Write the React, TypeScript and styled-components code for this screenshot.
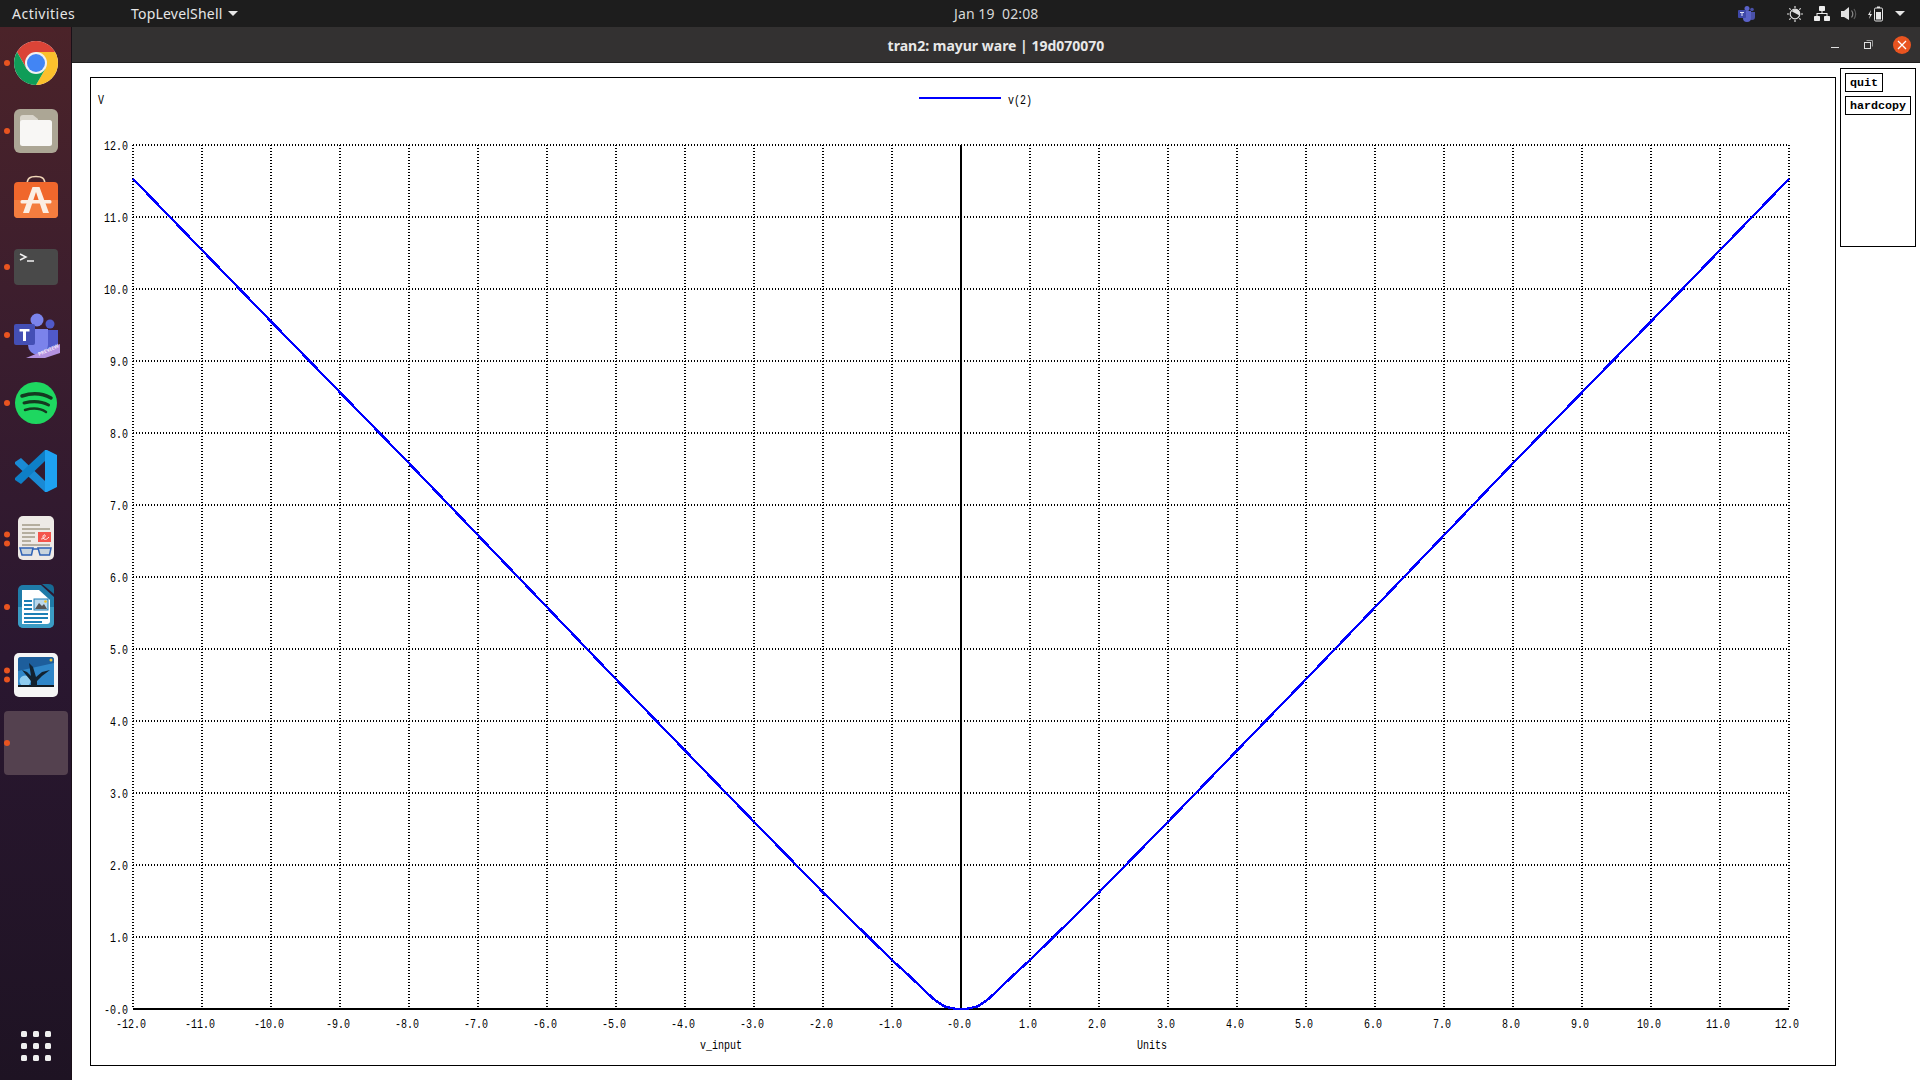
import styled, { createGlobalStyle } from "styled-components";

const GlobalStyle = createGlobalStyle`
  html, body {
    margin: 0;
    padding: 0;
    width: 1920px;
    height: 1080px;
    overflow: hidden;
    background: #fff;
  }
`;

const Screen = styled.div`
  display: flex;
  flex-direction: column;
  width: 1920px;
  height: 1080px;
`;
const TopBar = styled.header`
  display: grid;
  grid-template-columns: 954px auto 1fr;
  align-items: center;
  height: 27px;
  background: #1d1d1d;
  color: #e6e6e6;
  font-family: "Noto Sans", sans-serif;
  font-size: 14px;
`;
const TopLeft = styled.div`
  display: flex;
  align-items: center;
`;
const Activities = styled.span`
  margin-left: 12px;
  width: 119px;
  letter-spacing: 0.5px;
`;
const AppMenu = styled.span`
  display: flex;
  align-items: center;
  gap: 5px;
  letter-spacing: 0.2px;
`;
const Caret = styled.span`
  width: 0;
  height: 0;
  border-left: 5px solid transparent;
  border-right: 5px solid transparent;
  border-top: 5px solid #e6e6e6;
`;
const Clock = styled.span`
  color: #d8d8d8;
  white-space: pre;
  letter-spacing: 0.1px;
`;
const Tray = styled.div`
  display: flex;
  align-items: center;
  justify-content: flex-end;
  padding-right: 15px;
  gap: 11px;
`;
const TeamsTray = styled.span`
  display: flex;
  margin-right: 20px;
`;
const Main = styled.div`
  display: flex;
  flex: 1;
  min-height: 0;
`;
const Dock = styled.nav`
  display: flex;
  flex-direction: column;
  flex: none;
  width: 72px;
  padding-top: 2px;
  padding-bottom: 19px;
  box-sizing: border-box;
  background: linear-gradient(180deg, #4b2329 0%, #3a1d2e 30%, #2a1730 60%, #1e1323 100%);
  border-right: 1px solid #1a1018;
`;
const DockItem = styled.div<{ $active?: boolean }>`
  position: relative;
  display: flex;
  align-items: center;
  justify-content: center;
  height: 68px;
  flex: none;
  &::before {
    content: "";
    display: ${(p) => (p.$active ? "block" : "none")};
    position: absolute;
    left: 4px;
    top: 2px;
    width: 64px;
    height: 64px;
    border-radius: 4px;
    background: #54414f;
  }
`;
const Pips = styled.div`
  position: absolute;
  left: 4px;
  top: 50%;
  transform: translateY(-50%);
  display: flex;
  flex-direction: column;
  gap: 3px;
`;
const Pip = styled.i`
  display: block;
  width: 6px;
  height: 6px;
  border-radius: 50%;
  background: #e95420;
`;
const AppGrid = styled.div`
  display: grid;
  grid-template-columns: repeat(3, 6px);
  gap: 6px;
  margin: auto 0 0 21px;
`;
const GridDot = styled.i`
  display: block;
  width: 6px;
  height: 6px;
  border-radius: 1.5px;
  background: #f0f0f0;
`;
const Win = styled.div`
  display: flex;
  flex-direction: column;
  flex: 1;
  min-width: 0;
`;
const TitleBar = styled.div`
  position: relative;
  display: flex;
  align-items: center;
  justify-content: center;
  height: 36px;
  padding-top: 1px;
  box-sizing: border-box;
  background: #333131;
  border-bottom: 1px solid #1f1e1e;
  color: #e8e8e8;
  font-family: "Noto Sans", sans-serif;
  font-weight: 700;
  font-size: 14px;
`;
const WinControls = styled.div`
  position: absolute;
  right: 9px;
  top: 0;
  bottom: 0;
  display: flex;
  align-items: center;
  gap: 17px;
`;
const CloseButton = styled.span`
  display: flex;
  align-items: center;
  justify-content: center;
  width: 18px;
  height: 18px;
  border-radius: 50%;
  background: #e95420;
`;
const Body = styled.main`
  display: flex;
  align-items: flex-start;
  flex: 1;
  gap: 4px;
  padding-left: 18px;
  background: #fff;
`;
const PlotFrame = styled.div`
  display: flex;
  margin-top: 14px;
  border: 1px solid #000;
`;
const SidePanel = styled.aside`
  display: flex;
  flex-direction: column;
  align-items: flex-start;
  gap: 4px;
  width: 76px;
  height: 179px;
  margin-top: 5px;
  padding: 4px;
  box-sizing: border-box;
  border: 1px solid #000;
`;
const PanelButton = styled.button`
  height: 19px;
  padding: 1px 4px 0;
  background: #fff;
  border: 1px solid #000;
  border-radius: 0;
  color: #000;
  font-family: "Liberation Mono", monospace;
  font-weight: 700;
  font-size: 11.67px;
  line-height: 16px;
`;
const ChartText = styled.text`
  font-family: "Liberation Mono", monospace;
  font-size: 13px;
  fill: #000;
`;

const LEFT = 133;
const RIGHT = 1789;
const TOP = 145;
const BOTTOM = 1009;
const toX = (v: number) => LEFT + (v + 12) * 69;
const toY = (v: number) => BOTTOM - v * 72;

const xTicks = Array.from({ length: 25 }, (_, i) => i - 12);
const yTicks = Array.from({ length: 13 }, (_, i) => i);

// |v| curve read off the reference
const samples: [number, number][] = [
  [0, 0], [0.1, 0.005], [0.25, 0.04], [0.4, 0.14], [0.52, 0.25], [0.76, 0.47], [1, 0.68],
  [1.32, 0.98], [2, 1.62], [3, 2.6], [5, 4.58], [8, 7.58], [10, 9.55], [12, 11.53],
];
const curve = [
  ...samples.slice(1).reverse().map(([x, y]) => [-x, y]),
  ...samples,
]
  .map(([x, y]) => `${toX(x)},${toY(y)}`)
  .join(" ");

function xLabel(v: number) {
  return (v === 0 ? "-0" : String(v)) + ".0";
}

// the plot font is a narrow bitmap face, 6px a character
function Label({ x, y, anchor, children }: { x: number; y: number; anchor?: "end" | "middle"; children: string }) {
  return (
    <ChartText x={x} y={y} textAnchor={anchor} textLength={children.length * 6} lengthAdjust="spacingAndGlyphs">
      {children}
    </ChartText>
  );
}

function Chart() {
  return (
    <svg width={1744} height={987} viewBox="91 78 1744 987">
      <g stroke="#000" strokeWidth={2} strokeDasharray="1 2" shapeRendering="crispEdges">
        {xTicks.filter((v) => v !== 0).map((v) => (
          <line key={v} x1={toX(v)} x2={toX(v)} y1={TOP} y2={BOTTOM} />
        ))}
        {yTicks.filter((v) => v !== 0).map((v) => (
          <line key={v} x1={LEFT} x2={RIGHT} y1={toY(v)} y2={toY(v)} />
        ))}
      </g>
      <g stroke="#000" strokeWidth={2} shapeRendering="crispEdges">
        <line x1={LEFT} x2={RIGHT} y1={BOTTOM} y2={BOTTOM} />
        <line x1={toX(0)} x2={toX(0)} y1={TOP} y2={BOTTOM} />
      </g>
      <polyline points={curve} fill="none" stroke="#0000ff" strokeWidth={2.4} shapeRendering="crispEdges" />
      <line x1={919} x2={1001} y1={98} y2={98} stroke="#0000ff" strokeWidth={2} shapeRendering="crispEdges" />
      <Label x={1008} y={104}>v(2)</Label>
      <Label x={98} y={104}>V</Label>
      {yTicks.map((v) => (
        <Label key={v} x={128} y={toY(v) + 5} anchor="end">
          {xLabel(v)}
        </Label>
      ))}
      {xTicks.map((v) => (
        <Label key={v} x={toX(v) - 2} y={1028} anchor="middle">
          {xLabel(v)}
        </Label>
      ))}
      <Label x={700} y={1049}>v_input</Label>
      <Label x={1137} y={1049}>Units</Label>
    </svg>
  );
}

function ChromeIcon() {
  return (
    <svg width={48} height={48} viewBox="0 0 48 48">
      <circle cx={24} cy={24} r={22} fill="#fff" />
      <path d="M5 13A22 22 0 0 1 43 13L24 13L14.5 29.5Z" fill="#db4437" />
      <path d="M43 13A22 22 0 0 1 24 46L33.5 29.5L24 13Z" fill="#fbc02d" />
      <path d="M24 46A22 22 0 0 1 5 13L14.5 29.5L33.5 29.5Z" fill="#0f9d58" />
      <circle cx={24} cy={24} r={11} fill="#f1f1f1" />
      <circle cx={24} cy={24} r={9} fill="#4285f4" />
    </svg>
  );
}

function FilesIcon() {
  return (
    <svg width={48} height={48} viewBox="0 0 48 48">
      <rect x={2} y={2} width={44} height={44} rx={6} fill="#aca695" />
      <path d="M8 11a3 3 0 0 1 3-3h10l5 4v6H8Z" fill="#d9d5cb" />
      <rect x={8} y={13} width={32} height={26} rx={2.5} fill="#f8f7f5" />
    </svg>
  );
}

function StoreIcon() {
  return (
    <svg width={48} height={48} viewBox="0 0 48 48">
      <path d="M15 10C15 3 18 1.500 24 1.500S33 3 33 10" fill="none" stroke="#f1d6b8" strokeWidth={1.6} />
      <rect x={2} y={7} width={44} height={36} rx={4} fill="#f0672c" />
      <path d="M2 25H46V39a4 4 0 0 1-4 4H6a4 4 0 0 1-4-4Z" fill="#f47d3f" />
      <path d="M20.500 12H27.500L37 38H31L24 17L17 38H11Z" fill="#fbeee4" />
      <rect x={8.500} y={25} width={31} height={3.500} rx={1.500} fill="#fbeee4" />
    </svg>
  );
}

function TerminalIcon() {
  return (
    <svg width={48} height={48} viewBox="0 0 48 48">
      <rect x={2} y={6} width={44} height={36} rx={4} fill="#494949" />
      <path d="M8 11L14 14L8 17" fill="none" stroke="#f2f2f2" strokeWidth={1.500} />
      <path d="M15 18H22" stroke="#f2f2f2" strokeWidth={1.500} />
    </svg>
  );
}

const PreviewText = styled.text`
  font-family: "Noto Sans", sans-serif;
  font-weight: 700;
  font-size: 5px;
  fill: #efe6fa;
`;

function TeamsIcon() {
  return (
    <svg width={48} height={48} viewBox="0 0 48 48">
      <circle cx={25} cy={9} r={6.500} fill="#7b83eb" />
      <circle cx={38} cy={13} r={4.500} fill="#5059c9" />
      <path d="M32 19H46V33a7 7 0 0 1-14 0Z" fill="#5059c9" />
      <path d="M16 18H36V34a10 10 0 0 1-20 0Z" fill="#7b83eb" />
      <rect x={2} y={13} width={21} height={21} rx={2} fill="#444fb5" />
      <path d="M7.500 18H17.500V20.500H14V30H11V20.500H7.500Z" fill="#fff" />
      <path d="M14 47L48 33V42L33 47Z" fill="#b392e0" />
      <PreviewText x={27} y={45} transform="rotate(-24 27 45)">PREVIEW</PreviewText>
    </svg>
  );
}

function SpotifyIcon() {
  return (
    <svg width={48} height={48} viewBox="0 0 48 48">
      <circle cx={24} cy={24} r={21} fill="#1ed760" />
      <g fill="none" stroke="#143a20" strokeLinecap="round">
        <path d="M10 17C19 14 30 14 39 19" strokeWidth={3.500} />
        <path d="M12 24C20 22 29 22 36.500 26" strokeWidth={3} />
        <path d="M13 31C20 29 28 29 34 33" strokeWidth={2.500} />
      </g>
    </svg>
  );
}

function VSCodeIcon() {
  return (
    <svg width={48} height={48} viewBox="0 0 48 48">
      <path d="M3 15L9 11L33 34V45L3 17Z" fill="#1a8ad4" />
      <path d="M33 3V14L9 37L3 33V31Z" fill="#0e7fc7" />
      <path d="M33 3H35L45 8V40L35 45H33Z" fill="#1ea1f1" />
    </svg>
  );
}

function ReaderIcon() {
  return (
    <svg width={48} height={48} viewBox="0 0 48 48">
      <rect x={6} y={1} width={36} height={44} rx={5} fill="#eeeae6" />
      <g fill="#b5ae9f">
        <rect x={10} y={9} width={18} height={2} />
        <rect x={10} y={13} width={28} height={2} />
        <rect x={10} y={17} width={13} height={2} />
        <rect x={10} y={21} width={13} height={2} />
        <rect x={10} y={25} width={9} height={2} />
        <rect x={10} y={29} width={28} height={2} />
      </g>
      <rect x={26} y={17} width={13} height={10} fill="#f4544c" />
      <path d="M29 24C31 24 34 22 33 20C31 19 30 23 32 24S35 24 37 22" fill="none" stroke="#fff" strokeWidth={0.900} />
      <g fill="#c9d4dd" stroke="#2f62b5" strokeWidth={1.500}>
        <path d="M8 33H21L19.500 40H10Z" />
        <path d="M26 33H39L37.500 40H28Z" />
      </g>
      <path d="M21 34H26" stroke="#2f62b5" strokeWidth={1.500} />
    </svg>
  );
}

function WriterIcon() {
  return (
    <svg width={48} height={48} viewBox="0 0 48 48">
      <path d="M11 2H29L42 14V40a5 5 0 0 1-5 5H11a5 5 0 0 1-5-5V7a5 5 0 0 1 5-5Z" fill="#1f7ba8" />
      <path d="M6 24H42V40a5 5 0 0 1-5 5H11a5 5 0 0 1-5-5Z" fill="#3b9cc4" />
      <path d="M30 1L36 1Q42 1 42 6V11Z" fill="#176a94" />
      <path d="M10 7H27L38 17V38a3 3 0 0 1-3 3H10Z" fill="#fff" />
      <g fill="#1c7fb5">
        <rect x={12} y={17} width={8} height={2} />
        <rect x={12} y={21} width={8} height={2} />
        <rect x={12} y={25} width={8} height={2} />
        <rect x={12} y={30} width={24} height={2} />
        <rect x={12} y={34} width={24} height={2} />
        <rect x={12} y={38} width={18} height={2} />
      </g>
      <rect x={22} y={16} width={14} height={11} fill="#b9d8ec" stroke="#1c7fb5" />
      <path d="M23 26L27 20L30 23L32 21L35 26Z" fill="#555" />
      <circle cx={33.500} cy={18.500} r={1.300} fill="#f0c020" />
    </svg>
  );
}

function ShotwellIcon() {
  return (
    <svg width={48} height={48} viewBox="0 0 48 48">
      <rect x={2} y={2} width={44} height={44} rx={5} fill="#f5f5f5" />
      <rect x={6} y={6} width={36} height={30} rx={3} fill="#2f86c8" />
      <path d="M6 9a3 3 0 0 1 3-3H39a3 3 0 0 1 3 3V12L6 20Z" fill="#1d5e9c" />
      <circle cx={13} cy={30} r={5.500} fill="#8fcdf0" />
      <path d="M6 34H42V36H6Z" fill="#111a22" />
      <path d="M19 35V30L10 19L15 21L19 25L17 12L21 16L24 26L30 21L38 19L30 25L25 30V35Z" fill="#12222f" />
      <circle cx={39} cy={9} r={1.500} fill="#e6c13c" />
    </svg>
  );
}

const apps = [
  { key: "chrome", icon: <ChromeIcon />, pips: 1 },
  { key: "files", icon: <FilesIcon />, pips: 1 },
  { key: "store", icon: <StoreIcon />, pips: 0 },
  { key: "terminal", icon: <TerminalIcon />, pips: 1 },
  { key: "teams", icon: <TeamsIcon />, pips: 1 },
  { key: "spotify", icon: <SpotifyIcon />, pips: 1 },
  { key: "vscode", icon: <VSCodeIcon />, pips: 0 },
  { key: "reader", icon: <ReaderIcon />, pips: 2 },
  { key: "writer", icon: <WriterIcon />, pips: 1 },
  { key: "shotwell", icon: <ShotwellIcon />, pips: 2 },
];

function TrayIcons() {
  return (
    <Tray>
      <TeamsTray>
        <svg width={18} height={16} viewBox="0 0 18 16">
          <circle cx={9} cy={2.500} r={2.500} fill="#5a62c8" />
          <circle cx={14} cy={3.500} r={1.800} fill="#4a51a8" />
          <path d="M11 6H17V11a3 3 0 0 1-6 0Z" fill="#4a51a8" />
          <path d="M5 5H13V12a4 4 0 0 1-8 0Z" fill="#5a62c8" />
          <rect x={0} y={4} width={8} height={8} rx={1} fill="#3f48a8" />
          <path d="M2 6H6V7H4.500V10H3.500V7H2Z" fill="#dfe1f7" />
        </svg>
      </TeamsTray>
      <svg width={16} height={16} viewBox="0 0 16 16">
        <g stroke="#e0e0e0" strokeWidth={1.200}>
          <path d="M8 0V2M8 14V16M0 8H2M14 8H16M2.300 2.300L3.700 3.700M12.300 12.300L13.700 13.700M2.300 13.700L3.700 12.300M12.300 3.700L13.700 2.300" />
        </g>
        <circle cx={8} cy={8} r={4.800} fill="#1d1d1d" stroke="#e0e0e0" strokeWidth={1.200} />
        <path d="M5 5.500A4 4 0 0 1 12.500 9.500Z" fill="#e0e0e0" />
      </svg>
      <svg width={16} height={16} viewBox="0 0 16 16" fill="#eeeeee">
        <rect x={5} y={0} width={6} height={5} rx={0.800} />
        <rect x={0} y={10} width={6} height={5} rx={0.800} />
        <rect x={10} y={10} width={6} height={5} rx={0.800} />
        <path d="M7.500 5H8.500V7H13.500V10H12.500V8H3.500V10H2.500V7H7.500Z" />
      </svg>
      <svg width={16} height={16} viewBox="0 0 16 16">
        <path d="M0 5H3L8 1V14L3 11H0Z" fill="#e0e0e0" />
        <path d="M10.500 4.500C12 6.500 12 9.500 10.500 11.500" fill="none" stroke="#8a8a8a" strokeWidth={1.200} />
        <path d="M13 3C15 6 15 10 13 13" fill="none" stroke="#5a5a5a" strokeWidth={1.200} />
      </svg>
      <svg width={16} height={16} viewBox="0 0 16 16">
        <path d="M3 4L0 9H2L1 13L4 8H2Z" fill="#e8e8e8" />
        <rect x={6.500} y={2} width={8} height={13} rx={1.200} fill="none" stroke="#e8e8e8" />
        <rect x={9} y={0.500} width={3} height={1.500} fill="#e8e8e8" />
        <rect x={8} y={6} width={5} height={7.500} fill="#e8e8e8" />
      </svg>
      <Caret />
    </Tray>
  );
}

export default function App() {
  return (
    <Screen>
      <GlobalStyle />
      <TopBar>
        <TopLeft>
          <Activities>Activities</Activities>
          <AppMenu>
            TopLevelShell <Caret />
          </AppMenu>
        </TopLeft>
        <Clock>Jan 19  02:08</Clock>
        <TrayIcons />
      </TopBar>
      <Main>
        <Dock>
          {apps.map((app) => (
            <DockItem key={app.key}>
              {app.icon}
              <Pips>
                {Array.from({ length: app.pips }, (_, i) => (
                  <Pip key={i} />
                ))}
              </Pips>
            </DockItem>
          ))}
          <DockItem $active>
            <Pips>
              <Pip />
            </Pips>
          </DockItem>
          <AppGrid>
            {Array.from({ length: 9 }, (_, i) => (
              <GridDot key={i} />
            ))}
          </AppGrid>
        </Dock>
        <Win>
          <TitleBar>
            tran2: mayur ware | 19d070070
            <WinControls>
              <svg width={16} height={16} viewBox="0 0 16 16">
                <rect x={4} y={10} width={8} height={1} fill="#e0e0e0" />
              </svg>
              <svg width={16} height={16} viewBox="0 0 16 16" fill="none" stroke="#e0e0e0">
                <rect x={4.500} y={5.500} width={6} height={6} />
                <path d="M6.500 3.500H12.500V9.500" stroke="#9a9a9a" />
              </svg>
              <CloseButton>
                <svg width={10} height={10} viewBox="0 0 10 10">
                  <path d="M1 1L9 9M9 1L1 9" stroke="#fff" strokeWidth={1.300} />
                </svg>
              </CloseButton>
            </WinControls>
          </TitleBar>
          <Body>
            <PlotFrame>
              <Chart />
            </PlotFrame>
            <SidePanel>
              <PanelButton>quit</PanelButton>
              <PanelButton>hardcopy</PanelButton>
            </SidePanel>
          </Body>
        </Win>
      </Main>
    </Screen>
  );
}
